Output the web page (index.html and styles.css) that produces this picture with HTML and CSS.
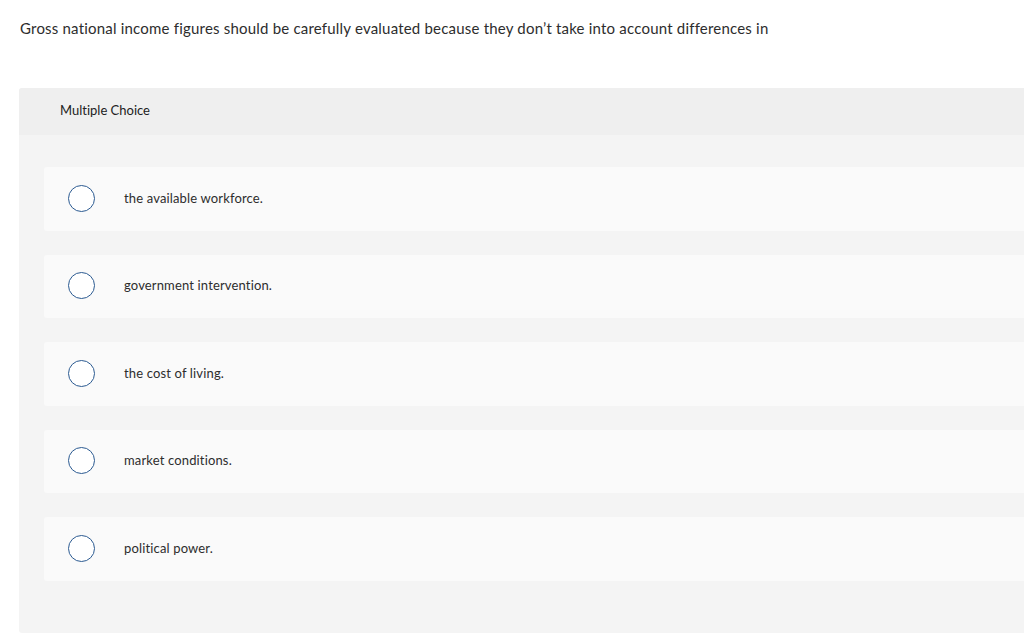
FILE: index.html
```html
<!DOCTYPE html>
<html>
<head>
<meta charset="utf-8">
<link rel="stylesheet" href="styles.css">
</head>
<body>
<p class="question">Gross national income figures should be carefully evaluated because they don’t take into account differences in</p>
<section class="panel">
  <div class="panel-head">Multiple Choice</div>
  <div class="options">
    <div class="option"><span class="radio"></span><span class="label">the available workforce.</span></div>
    <div class="option"><span class="radio"></span><span class="label">government intervention.</span></div>
    <div class="option"><span class="radio"></span><span class="label">the cost of living.</span></div>
    <div class="option"><span class="radio"></span><span class="label">market conditions.</span></div>
    <div class="option"><span class="radio"></span><span class="label">political power.</span></div>
  </div>
</section>
</body>
</html>
```
FILE: styles.css
```css
html, body {
  margin: 0;
  padding: 0;
  background: #ffffff;
  overflow: hidden;
}
body {
  font-family: "Lato", "Open Sans", "Liberation Sans", sans-serif;
  font-variant-ligatures: none;
  color: #2d2d2d;
  padding: 0 0 0 19px;
  width: 1060px;
}
.question {
  margin: 0;
  padding: 19px 0 0 1px;
  font-size: 15px;
  line-height: 18px;
  letter-spacing: 0.2px;
  color: #2d2d2d;
}
.panel {
  margin-top: 51px;
  background: #f4f4f4;
  border-radius: 3px;
  padding-bottom: 52px;
}
.panel-head {
  background: #efefef;
  height: 47px;
  box-sizing: border-box;
  padding: 14px 0 0 41px;
  font-size: 13px;
  line-height: 16px;
  color: #222;
  border-radius: 3px 3px 0 0;
}
.options {
  padding: 32px 0 0 25px;
  display: flex;
  flex-direction: column;
  gap: 24px;
}
.option {
  height: 63.5px;
  background: #fafafa;
  border-radius: 3px;
  display: flex;
  align-items: center;
}
.radio {
  width: 25px;
  height: 25px;
  border: 1.5px solid #2b5a91;
  border-radius: 50%;
  margin-left: 24px;
  background: #fff;
  flex: none;
  margin-top: -1px;
}
.label {
  margin-left: 29px;
  font-size: 13px;
  letter-spacing: 0.15px;
  color: #2d2d2d;
  margin-top: -2px;
}
```
